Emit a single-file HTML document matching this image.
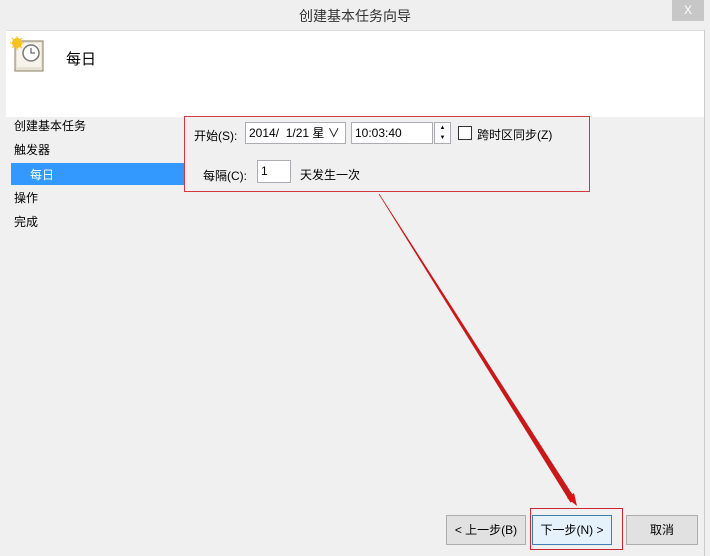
<!DOCTYPE html>
<html><head><meta charset="utf-8"><style>
body{margin:0;width:710px;height:556px;background:#f0f0f0;font-family:"Liberation Sans","Noto Sans CJK SC",sans-serif;font-size:12px;color:#000;position:relative;overflow:hidden}
.a{position:absolute}
.btn{position:absolute;height:30px;border:1px solid #adadad;background:#e1e1e1;box-sizing:border-box;text-align:center;line-height:28px;font-size:12px}
.inp{position:absolute;background:#fff;border:1px solid #abadb3;box-sizing:border-box;height:22px;line-height:20px;padding-left:3px}
</style></head><body>
<div class="a" style="left:0;top:0;width:710px;height:30px;background:#efefef"></div>
<div class="a" style="left:0;top:6px;width:710px;text-align:center;font-size:14px;color:#333">创建基本任务向导</div>
<div class="a" style="left:672px;top:0;width:32px;height:21px;background:#c7c7c7;color:#fff;text-align:center;line-height:21px;font-size:12px">X</div>
<div class="a" style="left:6px;top:30px;width:698px;height:86px;background:#fff;border-top:1px solid #ddd"></div>
<svg class="a" style="left:10px;top:36px" width="36" height="36" viewBox="0 0 36 36">
<rect x="5" y="5" width="28" height="30" fill="#e8e2d4" stroke="#8a7d66"/>
<rect x="7" y="7" width="24" height="24" fill="#f7f3ea"/>
<circle cx="21" cy="17" r="8" fill="#fff" stroke="#777" stroke-width="1.5"/>
<path d="M21 12v5h4" stroke="#444" fill="none"/>
<circle cx="7" cy="7" r="5" fill="#f6c21c"/>
<path d="M7 0v14M0 7h14M2 2l10 10M12 2L2 12" stroke="#f6c21c" stroke-width="1"/>
</svg>
<div class="a" style="left:66px;top:48px;font-size:15px">每日</div>
<div class="a" style="left:14px;top:117px">创建基本任务</div>
<div class="a" style="left:14px;top:141px">触发器</div>
<div class="a" style="left:11px;top:163px;width:174px;height:22px;background:#3399ff"></div>
<div class="a" style="left:30px;top:166px;color:#fff">每日</div>
<div class="a" style="left:14px;top:189px">操作</div>
<div class="a" style="left:14px;top:213px">完成</div>
<div class="a" style="left:184px;top:116px;width:404px;height:74px;border:1px solid #d0393d"></div>
<div class="a" style="left:194px;top:127px">开始(S):</div>
<div class="inp" style="left:245px;top:122px;width:101px">2014/&nbsp; 1/21 星 ∨</div>
<div class="inp" style="left:351px;top:122px;width:82px">10:03:40</div>
<div class="a" style="left:434px;top:122px;width:17px;height:22px;border:1px solid #abadb3;box-sizing:border-box;background:#fafafa;font-size:6px;line-height:10px;text-align:center">▲<br>▼</div>
<div class="a" style="left:458px;top:126px;width:12px;height:12px;border:1px solid #333;background:#fff"></div>
<div class="a" style="left:477px;top:126px">跨时区同步(Z)</div>
<div class="a" style="left:203px;top:167px">每隔(C):</div>
<div class="inp" style="left:257px;top:160px;width:34px;height:23px">1</div>
<div class="a" style="left:300px;top:166px">天发生一次</div>
<svg class="a" style="left:0;top:0" width="710" height="556">
<polygon points="379.3,193.8 378.7,194.2 570.5,502.5 575.5,499.3" fill="#c81818"/>
<path d="M577 506l-10-8 7-5z" fill="#e01010"/>
</svg>
<div class="a" style="left:704px;top:30px;width:1px;height:526px;background:#ccc"></div>
<div class="btn" style="left:446px;top:515px;width:80px">&lt; 上一步(B)</div>
<div class="btn" style="left:532px;top:515px;width:80px;border-color:#3c7fb1;background:#e5f1fb">下一步(N) &gt;</div>
<div class="btn" style="left:626px;top:515px;width:72px">取消</div>
<div class="a" style="left:530px;top:508px;width:91px;height:40px;border:1px solid #c8282d"></div>
</body></html>
